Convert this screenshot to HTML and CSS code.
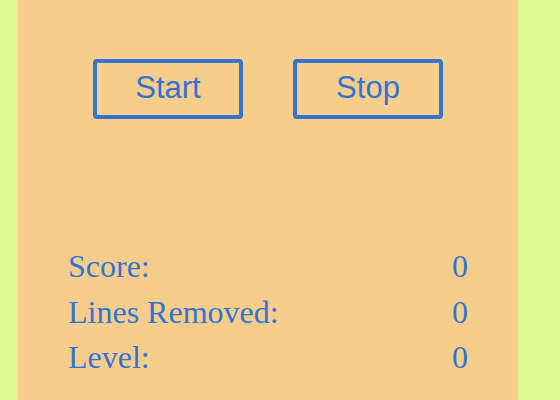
FILE: index.html
```html
<!DOCTYPE html>
<html>
<head>
<meta charset="utf-8">
<link rel="stylesheet" href="styles.css">
</head>
<body>
<div class="panel">
  <div class="controls">
    <button class="btn">Start</button>
    <button class="btn">Stop</button>
  </div>
  <div class="stats">
    <div class="row"><span>Score:</span><span>0</span></div>
    <div class="row"><span>Lines Removed:</span><span>0</span></div>
    <div class="row"><span>Level:</span><span>0</span></div>
  </div>
</div>
</body>
</html>
```
FILE: styles.css
```css
html, body {
  margin: 0;
  padding: 0;
  background: #def890;
  height: 100%;
  overflow: hidden;
}
.panel {
  margin-left: 18px;
  width: 500px;
  min-height: 400px;
  background: #f7cd8c;
  padding-top: 59px;
  box-sizing: border-box;
}
.controls {
  display: flex;
  justify-content: center;
  gap: 50px;
}
.btn {
  width: 150px;
  height: 60px;
  box-sizing: border-box;
  border: 4px solid #3274d4;
  border-radius: 4px;
  background: transparent;
  color: #3274d4;
  font-family: "Liberation Sans", Arial, sans-serif;
  font-size: 31px;
  padding: 0 0 2px 0;
  margin: 0;
}
.stats {
  margin-top: 125px;
  padding: 0 50px;
}
.row {
  display: flex;
  justify-content: space-between;
  font-family: "Liberation Serif", "Times New Roman", serif;
  font-size: 32px;
  line-height: 45.5px;
  color: #3274d4;
}
```
